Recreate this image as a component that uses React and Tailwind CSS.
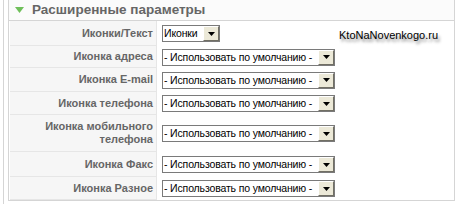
import React from 'react';

const rows = [
  { label: 'Иконки/Текст', value: 'Иконки', short: true, h: 'h-[25px]' },
  { label: 'Иконка адреса', h: 'h-[22px]' },
  { label: 'Иконка E-mail', h: 'h-[24px]' },
  { label: 'Иконка телефона', h: 'h-[23px]' },
  { label: 'Иконка мобильного телефона', h: 'h-[37px]', wrap: true },
  { label: 'Иконка Факс', h: 'h-[25px]' },
  { label: 'Иконка Разное', h: 'h-[23px]' },
];

const FakeSelect = ({ value, short }) => (
  <div className={`flex items-center h-[17px] border border-[#7a7a7a] bg-white ${short ? 'w-[58px]' : 'w-[173px]'}`}>
    <span className="flex-1 pl-[1px] text-[10.5px] tracking-[-0.15px] leading-none text-black whitespace-nowrap">
      {value}
    </span>
    <span className="flex-none flex items-center justify-center w-[16px] h-[15px] bg-[#ece9d8] border-t border-l border-t-white border-l-white border-r border-b border-r-[#716f64] border-b-[#716f64]">
      <svg width="7" height="4" viewBox="0 0 7 4">
        <path d="M0 0h7L3.5 4z" fill="#000" />
      </svg>
    </span>
  </div>
);

const App = () => {
  return (
    <div className="relative w-[458px] h-[204px] bg-white overflow-hidden" style={{ fontFamily: '"Liberation Sans", Arial, sans-serif' }}>
      <div className="absolute left-[3px] top-0 bottom-0 w-px bg-[#d5d5d5]" />
      <div className="ml-[8px] mr-[3px] border-l border-r border-b border-[#d5d5d5] h-[201px] flex flex-col">
        <div className="h-[21px] flex items-center gap-[8px] pl-[6px] border-b border-[#d5d5d5] bg-[#fbfbfb]">
          <svg width="9" height="6" viewBox="0 0 9 6">
            <path d="M0 0h9L4.5 6z" fill="#6fbf5a" />
          </svg>
          <span className="text-[13.5px] font-bold text-[#666] leading-none">Расширенные параметры</span>
        </div>
        <div className="flex flex-col">
          {rows.map((r) => (
            <div key={r.label} className={`flex ${r.h}`}>
              <div className="w-[147px] ml-px flex items-center justify-end pr-[3px] bg-[#f6f6f6] border-b border-r border-[#e6e6e6] text-right text-[11px] font-bold text-[#666] leading-[13px]">
                {r.wrap ? (
                  <span>Иконка мобильного<br />телефона</span>
                ) : (
                  <span className="whitespace-nowrap">{r.label}</span>
                )}
              </div>
              <div className="flex items-center pl-[5px]">
                <FakeSelect value={r.value || '- Использовать по умолчанию -'} short={r.short} />
              </div>
            </div>
          ))}
        </div>
      </div>
      <div
        className="absolute left-[339px] top-[27px] text-[11px] text-black"
        style={{ textShadow: '2px 3px 3px rgba(0,0,0,0.45)' }}
      >
        KtoNaNovenkogo.ru
      </div>
    </div>
  );
};

export default App;
